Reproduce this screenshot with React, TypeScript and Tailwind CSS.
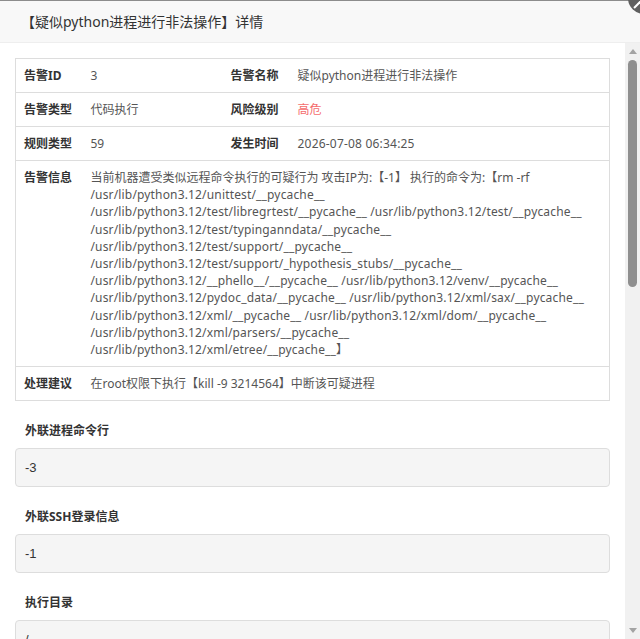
const cmdLines = [
  '当前机器遭受类似远程命令执行的可疑行为 攻击IP为:【-1】 执行的命令为:【rm -rf',
  '/usr/lib/python3.12/unittest/__pycache__',
  '/usr/lib/python3.12/test/libregrtest/__pycache__ /usr/lib/python3.12/test/__pycache__',
  '/usr/lib/python3.12/test/typinganndata/__pycache__',
  '/usr/lib/python3.12/test/support/__pycache__',
  '/usr/lib/python3.12/test/support/_hypothesis_stubs/__pycache__',
  '/usr/lib/python3.12/__phello__/__pycache__ /usr/lib/python3.12/venv/__pycache__',
  '/usr/lib/python3.12/pydoc_data/__pycache__ /usr/lib/python3.12/xml/sax/__pycache__',
  '/usr/lib/python3.12/xml/__pycache__ /usr/lib/python3.12/xml/dom/__pycache__',
  '/usr/lib/python3.12/xml/parsers/__pycache__',
  '/usr/lib/python3.12/xml/etree/__pycache__】',
];

const sections = [
  { label: '外联进程命令行', value: '-3' },
  { label: '外联SSH登录信息', value: '-1' },
  { label: '执行目录', value: '/' },
];

function Label({ children }: { children: React.ReactNode }) {
  return <th className="p-2 text-left align-top font-bold text-[#333] whitespace-nowrap">{children}</th>;
}

function Value({ children, span, className }: { children: React.ReactNode; span?: number; className?: string }) {
  return (
    <td colSpan={span} className={`p-2 align-top text-[#555] ${className ?? ''}`}>
      {children}
    </td>
  );
}

export default function App() {
  return (
    <div
      className="relative w-[640px] h-[639px] overflow-hidden bg-white flex flex-col"
      style={{ fontFamily: '"Noto Sans", "Noto Sans CJK SC", sans-serif' }}
    >
      {/* header */}
      <div className="h-[43px] shrink-0 flex items-center pl-[21px] bg-[#f8f8f8] border-t border-[#8c8c8c] border-b border-b-[#eee] text-[14px] text-[#333]">
        【疑似python进程进行非法操作】详情
      </div>
      <div className="absolute -top-[18px] -right-[20px] w-[32px] h-[32px] rounded-full bg-[#5f5f5f] flex items-center justify-center">
        <div className="w-[2px] h-[14px] bg-white rotate-45 -translate-x-[5px] translate-y-[5px]" />
      </div>

      <div className="flex flex-1 min-h-0">
        <div className="flex-1 min-w-0 overflow-hidden pt-[15px] pl-[15px] pr-[15px]">
          <table className="w-full table-fixed border-collapse border border-[#ddd] text-[12px] leading-[17px]">
            <colgroup>
              <col className="w-[67px]" />
              <col className="w-[140px]" />
              <col className="w-[67px]" />
              <col />
            </colgroup>
            <tbody>
              <tr className="border-b border-[#ddd] h-[34px]">
                <Label>告警ID</Label>
                <Value>3</Value>
                <Label>告警名称</Label>
                <Value>疑似python进程进行非法操作</Value>
              </tr>
              <tr className="border-b border-[#ddd] h-[34px]">
                <Label>告警类型</Label>
                <Value>代码执行</Value>
                <Label>风险级别</Label>
                <Value className="!text-[#f56c6c]">高危</Value>
              </tr>
              <tr className="border-b border-[#ddd] h-[34px]">
                <Label>规则类型</Label>
                <Value>59</Value>
                <Label>发生时间</Label>
                <Value className="tracking-[0.2px]">2026-07-08 06:34:25</Value>
              </tr>
              <tr className="border-b border-[#ddd]">
                <Label>告警信息</Label>
                <Value span={3}>
                  <div>
                    {cmdLines.map((l, i) => (
                      <div
                        key={i}
                        className={`whitespace-nowrap h-[17.2px] leading-[17.2px] ${i > 0 ? 'tracking-[0.16px]' : ''}`}
                      >
                        {l}
                      </div>
                    ))}
                  </div>
                </Value>
              </tr>
              <tr>
                <Label>处理建议</Label>
                <Value span={3}>在root权限下执行【kill -9 3214564】中断该可疑进程</Value>
              </tr>
            </tbody>
          </table>

          {sections.map((s) => (
            <div key={s.label}>
              <div className="mt-[21px] pl-[10px] h-[17px] leading-[17px] text-[12px] font-bold text-[#333]">{s.label}</div>
              <div
                className="mt-[9px] px-[9px] py-[9px] h-[39px] leading-[19px] text-[13px] text-[#333] bg-[#f5f5f5] border border-[#ddd] rounded-[4px]"
                style={{ fontFamily: '"Liberation Sans", sans-serif' }}
              >
                {s.value}
              </div>
            </div>
          ))}
        </div>

        {/* scrollbar */}
        <div className="w-[15px] shrink-0 bg-[#f1f1f1] flex flex-col items-center">
          <div className="h-[17px] flex items-center justify-center">
            <svg width="8" height="5" viewBox="0 0 8 5"><path d="M0 5 L4 0 L8 5 Z" fill="#a3a3a3" /></svg>
          </div>
          <div className="w-[9px] h-[227px] rounded-full bg-[#8f8f8f]" />
          <div className="flex-1" />
          <div className="h-[17px] flex items-center justify-center">
            <svg width="8" height="5" viewBox="0 0 8 5"><path d="M0 0 L8 0 L4 5 Z" fill="#a3a3a3" /></svg>
          </div>
        </div>
      </div>
    </div>
  );
}
